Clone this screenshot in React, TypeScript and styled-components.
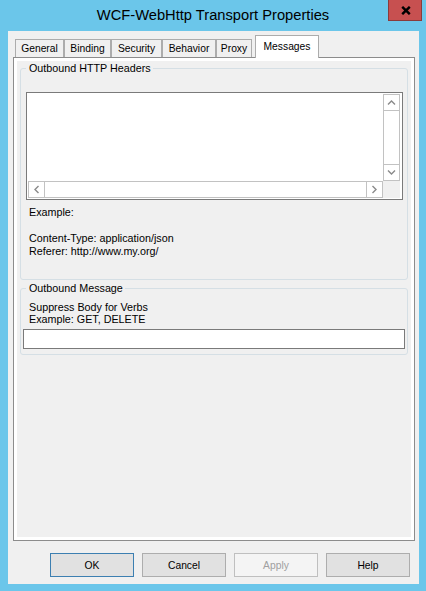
import React from "react";
import styled, { createGlobalStyle, css } from "styled-components";

const GlobalStyle = createGlobalStyle`
  html, body { margin: 0; padding: 0; background: #ffffff; }
  body { font-family: "Liberation Sans", Arial, sans-serif; color: #000; }
  *, *::before, *::after { box-sizing: border-box; }
`;

const Frame = styled.div`
  width: 426px;
  height: 591px;
  background: #6bc6ea;
  display: flex;
  flex-direction: column;
`;

const TitleBar = styled.div`
  height: 31px;
  flex: none;
  display: grid;
  grid-template-columns: 1fr auto 1fr;
  align-items: start;
`;

const Title = styled.div`
  grid-column: 2;
  font-size: 14.7px;
  line-height: 31px;
  color: #000;
  white-space: nowrap;
`;

const CloseButton = styled.div`
  grid-column: 3;
  justify-self: end;
  margin-right: 4px;
  width: 34px;
  height: 21px;
  background: #c75050;
  border: 1px solid #8a3b3b;
  border-top: none;
  display: flex;
  align-items: center;
  justify-content: center;
  padding-left: 1px;
`;

const Client = styled.div`
  flex: 1;
  margin: 0 7px 7px 8px;
  background: #f0f0f0;
  display: flex;
  flex-direction: column;
`;

const TabStrip = styled.div`
  height: 22px;
  margin-top: 4px;
  padding-left: 7px;
  display: flex;
  align-items: flex-end;
  flex: none;
`;

const Tab = styled.div<{ $w: number; $active?: boolean }>`
  width: ${(p) => p.$w}px;
  height: 18px;
  border: 1px solid #acacac;
  border-bottom: none;
  background: #f0f0f0;
  font-size: 10.3px;
  display: flex;
  align-items: center;
  justify-content: center;
  white-space: nowrap;
  ${(p) =>
    p.$active &&
    css`
      height: 23px;
      margin-left: 3px;
      margin-bottom: -1px;
      background: #ffffff;
      position: relative;
      z-index: 1;
      padding-bottom: 2px;
    `}
`;

const Panel = styled.div`
  margin-left: 5px;
  width: 402px;
  height: 484px;
  flex: none;
  border: 1px solid #8c8c8c;
  background: #ffffff;
  padding: 3px;
`;

const Page = styled.div`
  height: 100%;
  background: #f0f0f0;
  padding: 1px 3px 0 3px;
  display: flex;
  flex-direction: column;
`;

const GroupBox = styled.fieldset<{ $pad: string; $gap?: number }>`
  margin: ${(p) => p.$gap ?? 0}px 0 0 0;
  min-width: 0;
  border: 1px solid #d5dfe5;
  border-radius: 3px;
  padding: ${(p) => p.$pad};
  font-size: 10.75px;
`;

const Legend = styled.legend<{ $shift?: number }>`
  padding: 0 2px 0 3px;
  margin-left: ${(p) => p.$shift ?? 0}px;
  line-height: 13px;
  font-size: 10.75px;
`;

const Label = styled.div<{ $indent: number; $lh: number; $top?: number }>`
  padding-left: ${(p) => p.$indent}px;
  line-height: ${(p) => p.$lh}px;
  height: ${(p) => p.$lh}px;
  margin-top: ${(p) => p.$top ?? 0}px;
  white-space: nowrap;
`;

const ListBox = styled.div`
  width: 100%;
  height: 108px;
  border: 1px solid #7a7a7a;
  background: #ffffff;
  padding: 1px 2px 1px 1px;
  display: grid;
  grid-template-columns: 1fr 17px;
  grid-template-rows: 87px 17px;
`;

const ScrollBar = styled.div<{ $vertical?: boolean }>`
  border: 1px solid #c2c2c2;
  background: #ffffff;
  display: flex;
  flex-direction: ${(p) => (p.$vertical ? "column" : "row")};
  grid-column: ${(p) => (p.$vertical ? 2 : 1)};
  grid-row: ${(p) => (p.$vertical ? 1 : 2)};
`;

const ArrowBox = styled.div<{ $side: "top" | "bottom" | "left" | "right" }>`
  flex: none;
  width: ${(p) => (p.$side === "top" || p.$side === "bottom" ? "100%" : "16px")};
  height: ${(p) => (p.$side === "top" || p.$side === "bottom" ? "16px" : "100%")};
  ${(p) => `border-${p.$side === "top" ? "bottom" : p.$side === "bottom" ? "top" : p.$side === "left" ? "right" : "left"}: 1px solid #c2c2c2;`}
  display: flex;
  align-items: center;
  justify-content: center;
`;

const Track = styled.div`
  flex: 1;
`;

const Corner = styled.div`
  grid-column: 2;
  grid-row: 2;
  background: #f0f0f0;
`;

const TextBox = styled.div`
  width: 100%;
  height: 20px;
  margin-top: 4px;
  border: 1px solid #7a7a7a;
  background: #ffffff;
`;

const ButtonRow = styled.div`
  display: flex;
  justify-content: flex-end;
  gap: 8px;
  margin-top: 12px;
  padding-right: 9px;
  flex: none;
`;

const Button = styled.div<{ $variant?: "default" | "disabled" }>`
  width: 84px;
  height: 24px;
  background: #e1e1e1;
  border: 1px solid #adadad;
  font-size: 10.3px;
  display: flex;
  align-items: center;
  justify-content: center;
  color: #000;
  ${(p) =>
    p.$variant === "default" &&
    css`
      border-color: #3c7fb1;
    `}
  ${(p) =>
    p.$variant === "disabled" &&
    css`
      background: #f4f4f4;
      border-color: #bfbfbf;
      color: #a0a0a0;
    `}
`;

const Chevron: React.FC<{ dir: "up" | "down" | "left" | "right" }> = ({ dir }) => {
  const rot = { up: 0, down: 180, left: 270, right: 90 }[dir];
  return (
    <svg width="9" height="9" viewBox="0 0 9 9" style={{ transform: `rotate(${rot}deg)` }}>
      <polyline points="1,6.5 4.5,3 8,6.5" fill="none" stroke="#8a8a8a" strokeWidth="1.4" />
    </svg>
  );
};

const tabs: { label: string; w: number }[] = [
  { label: "General", w: 49 },
  { label: "Binding", w: 47 },
  { label: "Security", w: 51 },
  { label: "Behavior", w: 54 },
  { label: "Proxy", w: 36 },
];

export default function App() {
  return (
    <>
      <GlobalStyle />
      <Frame>
        <TitleBar>
          <Title>WCF-WebHttp Transport Properties</Title>
          <CloseButton>
            <svg width="10" height="9" viewBox="0 0 10 9">
              <path d="M1.2 0.8 L8.8 8.2 M8.8 0.8 L1.2 8.2" stroke="#000" strokeWidth="2.4" />
            </svg>
          </CloseButton>
        </TitleBar>
        <Client>
          <TabStrip>
            {tabs.map((t) => (
              <Tab key={t.label} $w={t.w}>
                {t.label}
              </Tab>
            ))}
            <Tab $w={64} $active>
              Messages
            </Tab>
          </TabStrip>
          <Panel>
            <Page>
              <GroupBox $pad="17px 4px 21px 5px">
                <Legend>Outbound HTTP Headers</Legend>
                <ListBox>
                  <ScrollBar $vertical>
                    <ArrowBox $side="top">
                      <Chevron dir="up" />
                    </ArrowBox>
                    <Track />
                    <ArrowBox $side="bottom">
                      <Chevron dir="down" />
                    </ArrowBox>
                  </ScrollBar>
                  <ScrollBar>
                    <ArrowBox $side="left">
                      <Chevron dir="left" />
                    </ArrowBox>
                    <Track />
                    <ArrowBox $side="right">
                      <Chevron dir="right" />
                    </ArrowBox>
                  </ScrollBar>
                  <Corner />
                </ListBox>
                <Label $indent={3} $lh={13} $top={6}>
                  Example:
                </Label>
                <Label $indent={3} $lh={13} />
                <Label $indent={3} $lh={13}>
                  Content-Type: application/json
                </Label>
                <Label $indent={3} $lh={13}>
                  Referer: http://www.my.org/
                </Label>
              </GroupBox>
              <GroupBox $pad="6px 2px 5px 2px" $gap={2}>
                <Legend $shift={3}>Outbound Message</Legend>
                <Label $indent={6} $lh={12}>
                  Suppress Body for Verbs
                </Label>
                <Label $indent={6} $lh={12}>
                  Example: GET, DELETE
                </Label>
                <TextBox />
              </GroupBox>
            </Page>
          </Panel>
          <ButtonRow>
            <Button $variant="default">OK</Button>
            <Button>Cancel</Button>
            <Button $variant="disabled">Apply</Button>
            <Button>Help</Button>
          </ButtonRow>
        </Client>
      </Frame>
    </>
  );
}
